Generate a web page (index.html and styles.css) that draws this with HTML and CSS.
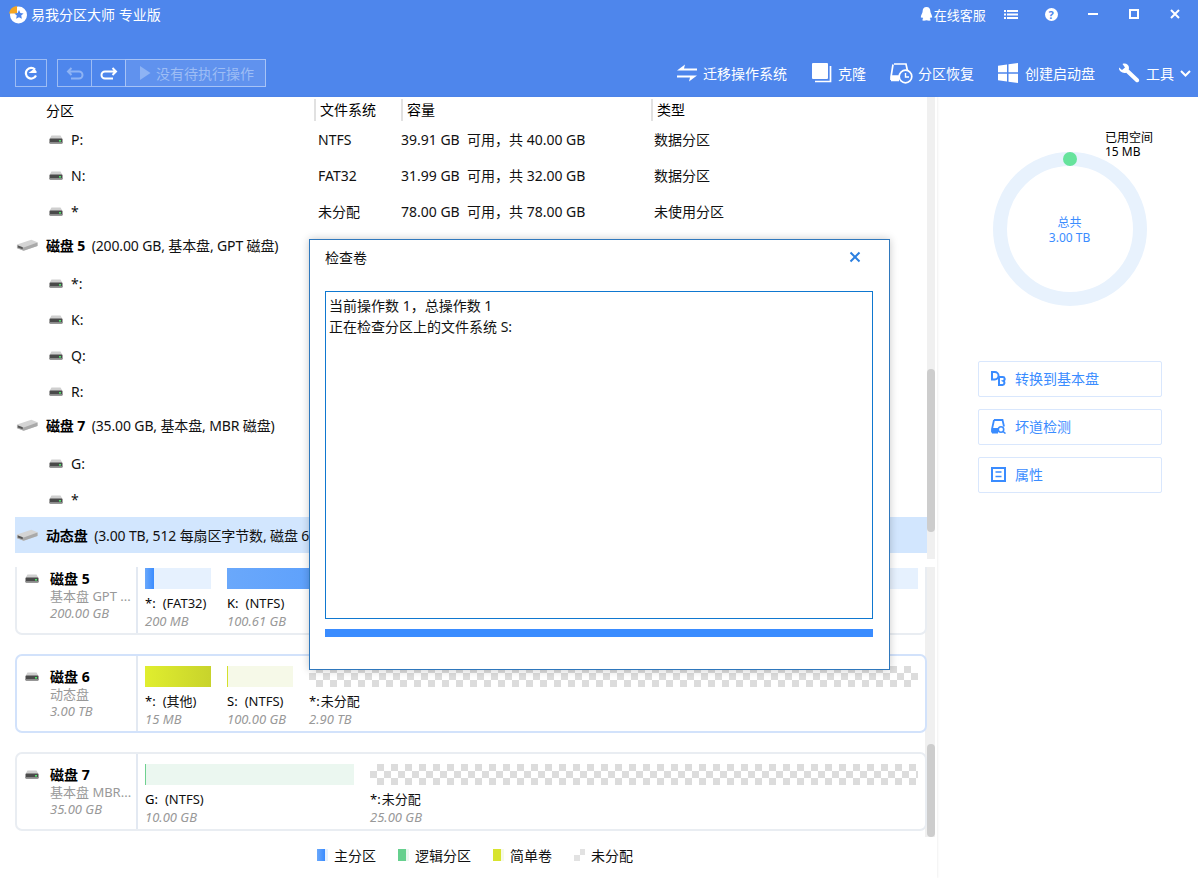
FILE: index.html
```html
<!DOCTYPE html>
<html lang="zh-CN">
<head>
<meta charset="utf-8">
<title>易我分区大师 专业版</title>
<link rel="stylesheet" href="styles.css">
</head>
<body>
<svg class="defs" width="0" height="0" aria-hidden="true">
  <defs>
    <symbol id="drive" viewBox="0 0 14 9">
      <path d="M2.500 0.500h9l2 3.500H0.500z" fill="#cfcfcf"/>
      <rect x="0.500" y="3.500" width="13" height="5" rx="1" fill="#4a4a4a"/>
      <rect x="0.500" y="7" width="13" height="1.500" fill="#8a8a8a"/>
      <rect x="10" y="5" width="2" height="1.600" fill="#4fe36a"/>
    </symbol>
    <symbol id="disk" viewBox="0 0 23 14">
      <path d="M1 6.500 16 1.500 22.500 4 22.500 8 8 13 1 10z" fill="#d4d4d4"/>
      <path d="M1 7 8 9.500 22.500 4.500 22.500 8 8 13 1 10.500z" fill="#a9a9a9"/>
      <path d="M2 7.500 7 9.300 7 11.500 2 9.700z" fill="#555"/>
    </symbol>
  </defs>
</svg>
<div class="app">
  <header class="top">
    <div class="title-row">
      <svg class="logo" width="20" height="20" viewBox="0 0 20 20">
        <circle cx="10.500" cy="11" r="8.500" fill="#fff"/>
        <path d="M1 9.500A9 9 0 0 1 9 2v7.500z" fill="#f5a623"/>
        <path d="M11 6l1.400 3 3.200.4-2.400 2.200.7 3.200-2.900-1.600-2.900 1.600.7-3.200-2.400-2.200 3.200-.4z" fill="#4e86ec"/>
      </svg>
      <span class="app-name">易我分区大师 专业版</span>
      <svg class="t-ico bell" width="13" height="16" viewBox="0 0 13 16"><path d="M6.500 1C3.800 1 2.600 3 2.600 5.500 2.600 7 1 9 .8 11c0 1 .6 1 1.400.3.300.7.700 1.200 1.100 1.600C2.500 13.300 2 13.800 2.300 14.300c.5.600 2.800.5 4.200 0 1.400.5 3.700.6 4.200 0 .3-.5-.2-1-1-1.400.4-.4.800-.9 1.100-1.600.8.700 1.400.7 1.400-.3-.2-2-1.800-4-1.800-5.500C10.400 3 9.200 1 6.500 1z" fill="#fff"/></svg>
      <span class="service">在线客服</span>
      <svg class="t-ico menu" width="14" height="11" viewBox="0 0 14 11"><path d="M0 1h2v2H0zM3 1h11v2H3zM0 4.500h2v2H0zM3 4.500h11v2H3zM0 8h2v2H0zM3 8h11v2H3z" fill="#fff"/></svg>
      <span class="t-ico help">?</span>
      <svg class="t-ico min" width="10" height="2" viewBox="0 0 10 2"><rect width="10" height="2" fill="#fff"/></svg>
      <svg class="t-ico max" width="10" height="10" viewBox="0 0 10 10"><rect x="1" y="1" width="8" height="8" fill="none" stroke="#fff" stroke-width="2"/></svg>
      <svg class="t-ico close" width="10" height="10" viewBox="0 0 10 10"><path d="M1 1l8 8M9 1l-8 8" stroke="#fff" stroke-width="2"/></svg>
    </div>
    <div class="tool-row">
      <button class="tbtn refresh" type="button">
        <svg width="14" height="14" viewBox="0 0 14 14"><path d="M12 9.500A5.300 5.300 0 1 1 11 3.500" fill="none" stroke="#fff" stroke-width="2.200"/><path d="M4.500 7h8v-1.500l-2-3z" fill="#fff"/></svg>
      </button>
      <div class="tgroup">
        <button class="tbtn undo" type="button">
          <svg width="18" height="13" viewBox="0 0 18 13"><path d="M5.500 1 2 4.500 5.500 8M2.500 4.500H13a3.500 3.500 0 0 1 0 7H5" fill="none" stroke="#8eb3f4" stroke-width="2"/></svg>
        </button>
        <button class="tbtn redo" type="button">
          <svg width="18" height="13" viewBox="0 0 18 13"><path d="M12.500 1 16 4.500 12.500 8M15.500 4.500H5a3.500 3.500 0 0 0 0 7h8" fill="none" stroke="#fff" stroke-width="2"/></svg>
        </button>
        <div class="pending">
          <svg width="11" height="14" viewBox="0 0 11 14"><path d="M0 0l10.500 7L0 14z" fill="#8eb3f4"/></svg>
          <span>没有待执行操作</span>
        </div>
      </div>
      <nav class="nav">
        <a class="nav-item n-migrate">
          <svg width="20" height="20" viewBox="0 0 20 20"><path d="M0 7.500h20v-2H7L8 1.500z M20 12.500H0v2h13l-1 4z" fill="#fff"/></svg>
          <span>迁移操作系统</span>
        </a>
        <a class="nav-item n-clone">
          <svg width="20" height="20" viewBox="0 0 20 20"><rect x="0" y="0" width="16" height="16" rx="1" fill="#fff"/><path d="M18.500 3v15.500H3" fill="none" stroke="#fff" stroke-width="1.700"/></svg>
          <span>克隆</span>
        </a>
        <a class="nav-item n-recover">
          <svg width="23" height="21" viewBox="0 0 23 21"><path d="M4 1h12l1.500 7M1 17V14L3 1.500M1 13h9M1 17.500h8" fill="none" stroke="#fff" stroke-width="1.700"/><rect x="1" y="13" width="8" height="5" fill="#fff"/><circle cx="15.500" cy="13.500" r="6.300" fill="#4e86ec" stroke="#fff" stroke-width="1.700"/><path d="M15.500 10v4h3.500" fill="none" stroke="#fff" stroke-width="1.400"/></svg>
          <span>分区恢复</span>
        </a>
        <a class="nav-item n-boot">
          <svg width="20" height="20" viewBox="0 0 20 20"><path d="M0 2.800 9 1.500V9.200H0zM10.500 1.300 20 0V9.200H10.500zM0 10.700H9V18.500L0 17.200zM10.500 10.700H20V20L10.500 18.700z" fill="#fff"/></svg>
          <span>创建启动盘</span>
        </a>
        <a class="nav-item n-tools">
          <svg width="22" height="20" viewBox="0 0 22 20"><path d="M1 4.500 4 7l3-2.500L4.500 1C7.500-.2 11 1.500 11 5l-.3 1.500 9.800 9.300c.9 1 .9 2.200 0 3-.9.800-2 .7-2.800 0L8.200 9.700C4.500 10.800.5 8 1 4.500z" fill="#fff"/></svg>
          <span>工具</span>
          <svg class="chev" width="11" height="7" viewBox="0 0 11 7"><path d="M1 1l4.500 4.500L10 1" fill="none" stroke="#fff" stroke-width="2"/></svg>
        </a>
      </nav>
    </div>
  </header>

  <main class="main">
    <section class="left">
      <div class="list-pane">
        <div class="list">
          <div class="row head">
            <div class="cell-name">分区</div>
            <div class="cell-h">文件系统</div>
            <div class="cell-h">容量</div>
            <div class="cell-h">类型</div>
          </div>
          <div class="row part"><div class="cell-part"><svg class="drive" width="14" height="9"><use href="#drive"/></svg>P:</div><div>NTFS</div><div>39.91 GB&nbsp;&nbsp;可用，共 40.00 GB</div><div>数据分区</div></div>
          <div class="row part"><div class="cell-part"><svg class="drive" width="14" height="9"><use href="#drive"/></svg>N:</div><div>FAT32</div><div>31.99 GB&nbsp;&nbsp;可用，共 32.00 GB</div><div>数据分区</div></div>
          <div class="row part"><div class="cell-part"><svg class="drive" width="14" height="9"><use href="#drive"/></svg>*</div><div>未分配</div><div>78.00 GB&nbsp;&nbsp;可用，共 78.00 GB</div><div>未使用分区</div></div>
          <div class="disk-row"><svg class="disk" width="22" height="14"><use href="#disk"/></svg><b>磁盘 5</b>&nbsp;(200.00 GB, 基本盘, GPT 磁盘)</div>
          <div class="row part"><div class="cell-part"><svg class="drive" width="14" height="9"><use href="#drive"/></svg>*:</div></div>
          <div class="row part"><div class="cell-part"><svg class="drive" width="14" height="9"><use href="#drive"/></svg>K:</div></div>
          <div class="row part"><div class="cell-part"><svg class="drive" width="14" height="9"><use href="#drive"/></svg>Q:</div></div>
          <div class="row part"><div class="cell-part"><svg class="drive" width="14" height="9"><use href="#drive"/></svg>R:</div></div>
          <div class="disk-row"><svg class="disk" width="22" height="14"><use href="#disk"/></svg><b>磁盘 7</b>&nbsp;(35.00 GB, 基本盘, MBR 磁盘)</div>
          <div class="row part"><div class="cell-part"><svg class="drive" width="14" height="9"><use href="#drive"/></svg>G:</div></div>
          <div class="row part"><div class="cell-part"><svg class="drive" width="14" height="9"><use href="#drive"/></svg>*</div></div>
          <div class="disk-row selected"><svg class="disk" width="22" height="14"><use href="#disk"/></svg><b>动态盘</b>&nbsp;(3.00 TB, 512 每扇区字节数, 磁盘 6)</div>
        </div>
        <div class="scroll scroll-a"><div class="thumb thumb-a"></div></div>
      </div>

      <div class="cards-pane">
        <div class="cards">
          <article class="card first">
            <div class="card-info">
              <div class="card-name"><svg class="drive" width="14" height="9"><use href="#drive"/></svg><b>磁盘 5</b></div>
              <div class="card-sub">基本盘 GPT ...</div>
              <div class="card-size">200.00 GB</div>
            </div>
            <div class="card-parts">
              <div class="p w66"><div class="bar bar-blue"><i class="fill-blue f14"></i></div><div class="p-label"><span class="drv">*:</span>(FAT32)</div><div class="p-size">200 MB</div></div>
              <div class="p grow"><div class="bar bar-blue"><i class="fill-blue f50"></i></div><div class="p-label"><span class="drv">K:</span>(NTFS)</div><div class="p-size">100.61 GB</div></div>
            </div>
          </article>
          <article class="card active">
            <div class="card-info">
              <div class="card-name"><svg class="drive" width="14" height="9"><use href="#drive"/></svg><b>磁盘 6</b></div>
              <div class="card-sub">动态盘</div>
              <div class="card-size">3.00 TB</div>
            </div>
            <div class="card-parts">
              <div class="p w66"><div class="bar bar-lime"><i class="fill-lime f100"></i></div><div class="p-label"><span class="drv">*:</span>(其他)</div><div class="p-size">15 MB</div></div>
              <div class="p w66"><div class="bar bar-cream"><i class="fill-lime edge"></i></div><div class="p-label"><span class="drv">S:</span>(NTFS)</div><div class="p-size">100.00 GB</div></div>
              <div class="p grow"><div class="bar bar-check"></div><div class="p-label"><span class="drv tight">*:</span>未分配</div><div class="p-size">2.90 TB</div></div>
            </div>
          </article>
          <article class="card">
            <div class="card-info">
              <div class="card-name"><svg class="drive" width="14" height="9"><use href="#drive"/></svg><b>磁盘 7</b></div>
              <div class="card-sub">基本盘 MBR...</div>
              <div class="card-size">35.00 GB</div>
            </div>
            <div class="card-parts">
              <div class="p w209"><div class="bar bar-mint"><i class="fill-green edge"></i></div><div class="p-label"><span class="drv">G:</span>(NTFS)</div><div class="p-size">10.00 GB</div></div>
              <div class="p grow"><div class="bar bar-check"></div><div class="p-label"><span class="drv tight">*:</span>未分配</div><div class="p-size">25.00 GB</div></div>
            </div>
          </article>
        </div>
        <div class="scroll scroll-b"><div class="thumb thumb-b"></div></div>
      </div>

      <div class="legend">
        <span class="lg"><i class="sw sw-blue"></i>主分区</span>
        <span class="lg"><i class="sw sw-green"></i>逻辑分区</span>
        <span class="lg"><i class="sw sw-lime"></i>简单卷</span>
        <span class="lg"><i class="sw sw-gray"></i>未分配</span>
      </div>
    </section>

    <aside class="right">
      <div class="usage">
        <svg class="ring" width="154" height="154" viewBox="0 0 154 154">
          <circle cx="77" cy="77" r="70" fill="none" stroke="#e8f2fd" stroke-width="14"/>
          <circle cx="77" cy="7" r="7" fill="#66e39c"/>
        </svg>
        <div class="used"><div>已用空间</div><div>15 MB</div></div>
        <div class="total"><div>总共</div><div>3.00 TB</div></div>
      </div>
      <div class="actions">
        <a class="act">
          <svg width="15" height="15" viewBox="0 0 15 15"><path d="M1 1h2.800a3.200 3.200 0 0 1 0 7.500H1z" fill="none" stroke="#3a8cff" stroke-width="2"/><path d="M8 6h3.500a2 2 0 0 1 .8 3.900 2.200 2.200 0 0 1-.8 4.100H8z" fill="none" stroke="#3a8cff" stroke-width="2"/></svg>
          <span>转换到基本盘</span>
        </a>
        <a class="act">
          <svg width="15" height="15" viewBox="0 0 15 15"><path d="M3 1h8.500l1.500 6.500M1 13.500V10L3 1M1 13.500h6" fill="none" stroke="#3a8cff" stroke-width="1.800"/><rect x="1" y="9" width="6" height="5" fill="#3a8cff"/><circle cx="10" cy="10.500" r="2.700" fill="none" stroke="#3a8cff" stroke-width="1.600"/><path d="M12 12.500l2.500 2" stroke="#3a8cff" stroke-width="1.600"/></svg>
          <span>坏道检测</span>
        </a>
        <a class="act">
          <svg width="15" height="15" viewBox="0 0 15 15"><rect x="1" y="1" width="13" height="13" fill="none" stroke="#3a8cff" stroke-width="2"/><path d="M4.500 5h6M4.500 9.500h6" stroke="#3a8cff" stroke-width="1.600"/></svg>
          <span>属性</span>
        </a>
      </div>
    </aside>
  </main>

  <div class="dialog">
    <div class="dlg-head">
      <span>检查卷</span>
      <svg width="12" height="12" viewBox="0 0 12 12"><path d="M1.500 1.500l9 9M10.500 1.500l-9 9" stroke="#2b7fe0" stroke-width="2"/></svg>
    </div>
    <div class="log">
      <div>当前操作数 1，总操作数 1</div>
      <div>正在检查分区上的文件系统 S:</div>
    </div>
    <div class="progress"></div>
  </div>
</div>
</body>
</html>
```

FILE: styles.css
```css
* { box-sizing: border-box; }
html, body { margin: 0; padding: 0; }
body {
  font-family: "Noto Sans", "Noto Sans CJK SC", sans-serif;
  font-size: 14px;
  color: #111;
  background: #fff;
}
.defs { position: absolute; }
.app { position: relative; width: 1198px; height: 878px; overflow: hidden; }
b { font-weight: 700; color: #000; }
i { display: block; }

/* header */
.top { height: 97px; background: #4e86ec; color: #fff; padding-left: 8px; }
.title-row { display: flex; align-items: center; height: 28px; }
.logo { margin-right: 3px; flex: none; }
.app-name { font-size: 14px; }
.bell { margin-left: 759px; }
.service { font-size: 13px; margin-left: 1px; margin-right: 18px; }
.t-ico { flex: none; }
.help {
  width: 13px; height: 13px; border-radius: 50%; background: #fff; color: #4e86ec;
  font-size: 11px; font-weight: 700; line-height: 13px; text-align: center; margin-left: 27px;
}
.min { margin-left: 30px; }
.max { margin-left: 31px; }
.close { margin-left: 31px; }

.tool-row { display: flex; align-items: center; height: 28px; margin-top: 31px; padding-left: 7px; }
.tbtn {
  display: flex; align-items: center; justify-content: center;
  height: 28px; padding: 0; background: transparent;
  border: 1px solid rgba(255,255,255,.45);
}
.refresh { width: 32px; margin-right: 10px; }
.tgroup { display: flex; }
.undo, .redo { width: 34px; border-right: 0; }
.pending {
  display: flex; align-items: center; height: 28px; width: 141px;
  padding-left: 14px; gap: 5px;
  border: 1px solid rgba(255,255,255,.45);
  background: rgba(255,255,255,.1);
  color: #9dbdf5; font-size: 14px;
}
.nav { display: flex; align-items: center; margin-left: 411px; }
.nav-item { display: flex; align-items: center; gap: 6px; white-space: nowrap; }
.n-clone { margin-left: 25px; }
.n-recover { margin-left: 24px; gap: 5px; }
.n-boot { margin-left: 24px; gap: 7px; }
.n-tools { margin-left: 23px; }

/* main */
.main { display: flex; height: 781px; }
.left { width: 937px; flex: none; box-shadow: 1px 0 2px rgba(0,0,0,.06); }
.list-pane { display: flex; height: 470px; padding-left: 15px; }
.list { width: 912px; height: 456px; overflow: hidden; flex: none; }
.scroll { width: 8px; background: #f0f0f0; flex: none; }
.scroll-a { height: 462px; }
.thumb { width: 8px; background: #cdcdcd; border-radius: 4px; }
.thumb-a { height: 163px; margin-top: 272px; }
.row {
  display: grid;
  grid-template-columns: 303px 83px 253px 1fr;
  align-items: center;
  height: 36px;
  white-space: nowrap;
}
.head { height: 24px; padding-top: 1px; grid-template-columns: 299px 87px 250px 1fr; color: #000; }
.cell-name { padding-left: 31px; }
.cell-h { border-left: 2px solid #e1e1e1; padding-left: 4px; height: 22px; line-height: 22px; }
.cell-part { display: flex; align-items: center; padding-left: 34px; }
.drive { margin-right: 8px; flex: none; }
.disk-row {
  display: flex; align-items: center; height: 36px; padding: 0 0 4px 1px;
  white-space: nowrap; letter-spacing: -.13px;
}
.disk-row b { margin-right: 3px; }
.disk { margin-right: 8px; flex: none; }
.disk-row.selected { background: #d2e6fe; padding-bottom: 0; }

/* cards */
.cards-pane { display: flex; height: 270px; padding-left: 15px; overflow: hidden; }
.cards { position: relative; z-index: 1; width: 912px; flex: none; }
.scroll-b { width: 10px; margin-left: -2px; padding-left: 2px; }
.thumb-b { height: 93px; margin-top: 177px; }
.card {
  display: flex; height: 79px; margin-bottom: 19px;
  border: 2px solid #e9edf2; border-radius: 7px; background: #fff;
}
.card.first { margin-top: -11px; }
.card.active { border-color: #d2e2fb; }
.card-info {
  width: 121px; flex: none; padding: 10px 0 0 8px;
  border-right: 2px solid #e3e9f2; overflow: hidden; white-space: nowrap;
}
.card-name { display: flex; align-items: center; height: 20px; }
.card-name .drive { margin-right: 11px; }
.card-sub { font-size: 13px; color: #999; height: 17px; line-height: 17px; margin-left: 25px; }
.card-size { font-size: 13px; color: #999; font-style: italic; height: 17px; line-height: 17px; margin-left: 25px; }
.card-parts { display: flex; gap: 16px; padding: 10px 7px 0 7px; flex: 1; min-width: 0; }
.p { flex: none; white-space: nowrap; }
.w66 { width: 66px; }
.w209 { width: 209px; }
.grow { flex: 1; min-width: 0; }
.bar { height: 21px; display: flex; }
.bar-blue { background: #e6f1fe; }
.bar-lime { background: #f6f9e8; }
.bar-cream { background: #f6f9e8; }
.bar-mint { background: #ebf7f0; }
.bar-check { background: repeating-conic-gradient(#dcdcdc 0 25%, #fff 0 50%) 0 0 / 14px 14px; }
.fill-blue { background: linear-gradient(90deg, #6aa8fb, #3a8cff); }
.fill-lime { background: linear-gradient(90deg, #e0ee2e, #c8d32c); }
.fill-green { background: #6fd190; }
.f14 { width: 9px; }
.f50 { width: 50%; }
.f100 { width: 100%; }
.edge { width: 1px; }
.p-label { font-size: 13px; height: 18px; line-height: 18px; margin-top: 5px; color: #111; }
.drv { margin-right: 7px; color: #000; }
.drv.tight { margin-right: 1px; }
.p-size { font-size: 13px; color: #999; font-style: italic; height: 18px; line-height: 18px; }

/* legend */
.legend { display: flex; gap: 22px; padding: 8px 0 0 317px; color: #111; }
.lg { display: flex; align-items: center; white-space: nowrap; }
.sw { width: 11px; height: 12px; margin-right: 6px; }
.sw-blue { background: linear-gradient(90deg, #6aa8fb 0, #3a8cff 70%, #e6f1fe 72%); }
.sw-green { background: linear-gradient(90deg, #66d08e 0 75%, #ebf7f0 75%); }
.sw-lime { background: linear-gradient(90deg, #d8e42e 0 75%, #f6f9e8 75%); }
.sw-gray { background: repeating-conic-gradient(#e2e2e2 0 25%, #fff 0 50%) 0 0 / 12px 12px; }

/* right */
.right { flex: 1; }
.usage { position: relative; width: 154px; height: 154px; margin: 55px 0 0 56px; }
.ring { display: block; }
.used { position: absolute; left: 112px; top: -21px; font-size: 12px; line-height: 14px; color: #000; white-space: nowrap; }
.total { position: absolute; left: 0; right: 1px; top: 63px; text-align: center; font-size: 12px; line-height: 15px; color: #3a8cff; }
.actions { display: flex; flex-direction: column; gap: 12px; margin: 55px 0 0 41px; width: 184px; }
.act {
  display: flex; align-items: center; gap: 9px; height: 36px; padding: 0 0 2px 12px;
  border: 1px solid #d9e7fd; border-radius: 2px; color: #3a8cff;
}

/* dialog */
.dialog {
  position: absolute; z-index: 2; left: 309px; top: 239px; width: 581px; height: 431px;
  padding: 0 16px 0 15px; background: #fff;
  border: 1px solid #2f78bd;
  box-shadow: 0 0 8px rgba(0,0,0,.22);
}
.dlg-head { display: flex; align-items: center; justify-content: space-between; height: 51px; padding: 0 12px 18px 0; color: #111; }
.log {
  height: 328px; padding: 3px 3px; border: 1px solid #0f78d0;
  line-height: 21px; color: #111;
}
.progress { height: 8px; margin-top: 10px; background: #3a8cff; }
```
